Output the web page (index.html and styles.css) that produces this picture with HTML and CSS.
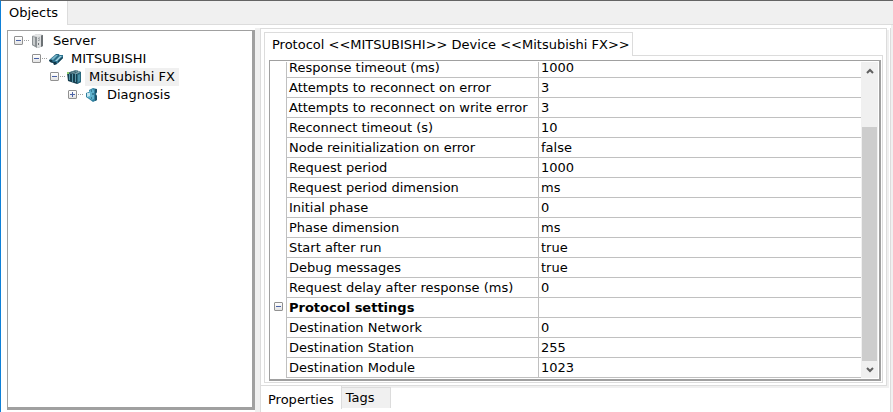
FILE: index.html
```html
<!DOCTYPE html>
<html lang="en">
<head>
    <meta charset="UTF-8">
    <meta name="viewport" content="width=device-width, initial-scale=1.0">
    <title>Objects</title>
    <link rel="stylesheet" href="styles.css">
</head>
<body>
    <div class="window">
        <div class="tabs">
            <button class="tab active">Objects</button>
            <div class="tabs-rest"></div>
        </div>

        <div class="main">
            <div class="tree-panel">
                <ul class="tree">
                    <li>
                        <div class="node">
                            <button class="toggle" aria-label="Collapse Server"></button>
                            <span class="dots"></span>
                            <svg class="icon" viewBox="0 0 16 16">
                                <path d="M2 3l5-2 6 1v11l-5 2-6-3z" fill="#a9adaf"/>
                                <path d="M2 3l5 1v11l-5-3z" fill="#8b9093"/>
                                <path d="M3 4l2 .5v8l-2-1z" fill="#c9cccd"/>
                                <path d="M2 3l5-2 6 1-5 2z" fill="#e6e7e8"/>
                                <path d="M7 4l4-1.5v11l-4 1.5z" fill="#dcdedf"/>
                                <path d="M11 2.500l2-.5v11l-2 1z" fill="#6c7174"/>
                                <path d="M8 5.500l2-.7M8 7.500l2-.7" stroke="#8b9093"/>
                                <path d="M8 10h1v2h-1z" fill="#6c7174"/>
                            </svg>
                            <span class="label">Server</span>
                        </div>
                        <ul>
                            <li>
                                <div class="node">
                                    <button class="toggle" aria-label="Collapse MITSUBISHI"></button>
                                    <span class="dots"></span>
                                    <svg class="icon" viewBox="0 0 16 16">
                                        <path d="M1 9l7-6 3 0 1 2-7 7-3-1z" fill="#2c6c86"/>
                                        <path d="M3 8l5-4 2 0-5 5z" fill="#79b7cb"/>
                                        <path d="M1 9l3 0 1 3-3-1z" fill="#123647"/>
                                        <path d="M5 11l7-7 3 0 0 3-6 6-3 1z" fill="#2f7592"/>
                                        <path d="M7 10l5-5 2 0-5 5z" fill="#a6d4e2"/>
                                        <path d="M5 11l3 0 1 2-3 1z" fill="#123647"/>
                                        <path d="M13 7l2-1v1l-5 5v-2z" fill="#174457"/>
                                    </svg>
                                    <span class="label">MITSUBISHI</span>
                                </div>
                                <ul>
                                    <li>
                                        <div class="node">
                                            <button class="toggle" aria-label="Collapse Mitsubishi FX"></button>
                                            <span class="dots"></span>
                                            <svg class="icon" viewBox="0 0 16 16">
                                                <path d="M1 4l9-3 5 2v10l-4 2-9-3z" fill="#173f50"/>
                                                <path d="M1 4l9-3 5 2-4 2z" fill="#86a9b3"/>
                                                <path d="M3 4l7-2M6 5l6-2.500" stroke="#3c6573"/>
                                                <path d="M3.500 5v6M6.500 5v8M9.500 5v8" stroke="#5796a9"/>
                                                <path d="M11 5l4-2v10l-4 2z" fill="#28687e"/>
                                                <path d="M12 6l2-1v7l-2 1z" fill="#4b91a8"/>
                                                <path d="M1 3h2v2h-2z" fill="#8ed06d"/>
                                            </svg>
                                            <span class="label selected">Mitsubishi FX</span>
                                        </div>
                                        <ul>
                                            <li>
                                                <div class="node">
                                                    <button class="toggle closed" aria-label="Expand Diagnosis"></button>
                                                    <span class="dots"></span>
                                                    <svg class="icon" viewBox="0 0 16 16">
                                                        <path d="M5 3l4-2 4 1v3l-1 2 1 2v4l-4 2-4-3-3-2V6l3-1z" fill="#2f7f9e"/>
                                                        <path d="M5 4l4-2 1 2v8l-2 1-3-2-2-1V6l2 0z" fill="#5fb2cd"/>
                                                        <path d="M3 6l3 0 0 3-3 1z" fill="#c4e6f0"/>
                                                        <path d="M7 4h1M7 11h1M8 7h2" stroke="#174c62"/>
                                                        <path d="M11 2l2 0v3l-2 2 2 2v4l-2 1z" fill="#1b526a"/>
                                                    </svg>
                                                    <span class="label">Diagnosis</span>
                                                </div>
                                            </li>
                                        </ul>
                                    </li>
                                </ul>
                            </li>
                        </ul>
                    </li>
                </ul>
            </div>

            <div class="splitter"></div>

            <div class="details">
                <div class="details-page">
                    <div class="page-tabs">
                        <button class="page-tab">Protocol &lt;&lt;MITSUBISHI&gt;&gt; Device &lt;&lt;Mitsubishi FX&gt;&gt;</button>
                        <div class="page-tabs-rest"></div>
                    </div>
                    <div class="page-body">
                        <div class="grid-box">
                            <div class="grid-view">
                                <table class="props">
                                    <tbody>
                                        <tr><td class="gutter"></td><th scope="row">Response timeout (ms)</th><td>1000</td></tr>
                                        <tr><td class="gutter"></td><th scope="row">Attempts to reconnect on error</th><td>3</td></tr>
                                        <tr><td class="gutter"></td><th scope="row">Attempts to reconnect on write error</th><td>3</td></tr>
                                        <tr><td class="gutter"></td><th scope="row">Reconnect timeout (s)</th><td>10</td></tr>
                                        <tr><td class="gutter"></td><th scope="row">Node reinitialization on error</th><td>false</td></tr>
                                        <tr><td class="gutter"></td><th scope="row">Request period</th><td>1000</td></tr>
                                        <tr><td class="gutter"></td><th scope="row">Request period dimension</th><td>ms</td></tr>
                                        <tr><td class="gutter"></td><th scope="row">Initial phase</th><td>0</td></tr>
                                        <tr><td class="gutter"></td><th scope="row">Phase dimension</th><td>ms</td></tr>
                                        <tr><td class="gutter"></td><th scope="row">Start after run</th><td>true</td></tr>
                                        <tr><td class="gutter"></td><th scope="row">Debug messages</th><td>true</td></tr>
                                        <tr><td class="gutter"></td><th scope="row">Request delay after response (ms)</th><td>0</td></tr>
                                        <tr class="group"><td class="gutter"><button class="toggle" aria-label="Collapse Protocol settings"></button></td><th scope="row">Protocol settings</th><td></td></tr>
                                        <tr><td class="gutter"></td><th scope="row">Destination Network</th><td>0</td></tr>
                                        <tr><td class="gutter"></td><th scope="row">Destination Station</th><td>255</td></tr>
                                        <tr><td class="gutter"></td><th scope="row">Destination Module</th><td>1023</td></tr>
                                    </tbody>
                                </table>
                            </div>
                            <div class="scrollbar">
                                <button class="arrow" aria-label="Scroll up">
                                    <svg viewBox="0 0 8 6"><path d="M1 5l3-3 3 3" /></svg>
                                </button>
                                <div class="track"><div class="thumb"></div></div>
                                <button class="arrow" aria-label="Scroll down">
                                    <svg viewBox="0 0 8 6"><path d="M1 1l3 3 3-3" /></svg>
                                </button>
                            </div>
                        </div>
                    </div>
                </div>
                <div class="bottom-tabs">
                    <button class="bottom-tab active">Properties</button>
                    <button class="bottom-tab">Tags</button>
                </div>
            </div>
        </div>
    </div>
</body>
</html>
```

FILE: styles.css
```css
* {
    box-sizing: border-box;
}

body {
    margin: 0;
    font-family: Verdana, "DejaVu Sans", sans-serif;
    font-size: 13px;
    line-height: 18px;
    color: #000;
    background: #fff;
}

button {
    font: inherit;
    color: inherit;
    border: none;
    padding: 0;
    background: none;
}

.window {
    display: flex;
    flex-direction: column;
    height: 100vh;
    border-top: 1px solid #646464;
    border-left: 1px solid #0f80d7;
}

/* top tabs */
.tabs {
    display: flex;
    height: 24px;
}

.tab {
    padding: 0 9px 0 8px;
    border-right: 1px solid #dcdcdc;
}

.tabs-rest {
    flex: 1;
    background: #f0f0f0;
    border-bottom: 1px solid #dcdcdc;
}

.main {
    display: flex;
    flex: 1;
    min-height: 0;
    padding-top: 3px;
    border-right: 2px solid #f0f0f0;
}

/* object tree */
.tree-panel {
    width: 248px;
    margin: 2px 0 2px 6px;
    border: 1px solid #a0a0a0;
    border-width: 1px 3px 3px 1px;
}

.tree,
.tree ul {
    list-style: none;
    margin: 0;
    padding: 0;
}

.tree {
    padding: 1px 0 0 6px;
}

.tree ul {
    padding-left: 18px;
}

.node {
    display: flex;
    align-items: center;
    height: 18px;
}

.toggle {
    display: block;
    width: 9px;
    height: 9px;
    margin-bottom: 2px;
    border: 1px solid #919191;
    border-radius: 1px;
    background: linear-gradient(#4b63a7, #4b63a7) center / 5px 1px no-repeat, linear-gradient(#fff, #e4e4e4);
}

.toggle.closed {
    background: linear-gradient(#4b63a7, #4b63a7) center / 5px 1px no-repeat, linear-gradient(#4b63a7, #4b63a7) center / 1px 5px no-repeat, linear-gradient(#fff, #e4e4e4);
}

.dots {
    width: 5px;
    margin: 0 1px 2px;
    border-top: 1px dotted #a0a0a0;
}

.icon {
    width: 16px;
    height: 16px;
}

.label {
    margin-left: 3px;
    padding: 0 4px;
}

.label.selected {
    background: #f0f0f0;
}

.splitter {
    width: 5px;
    background: #f0f0f0;
}

/* right side */
.details {
    display: flex;
    flex: 1;
    flex-direction: column;
    min-width: 0;
    border-left: 1px solid #dcdcdc;
    border-right: 1px solid #dcdcdc;
}

.details-page {
    display: flex;
    flex: 1;
    flex-direction: column;
    min-height: 0;
    margin-right: 3px;
    padding: 3px 3px 2px;
    border: 1px solid #dcdcdc;
    border-left: none;
    box-shadow: 2px 2px 0 #f0f0f0;
}

.page-tabs {
    display: flex;
    height: 24px;
}

.page-tab {
    padding: 0 2px 0 7px;
    border: 1px solid #dcdcdc;
    border-bottom: none;
}

.page-tabs-rest {
    flex: 1;
    border-bottom: 1px solid #dcdcdc;
}

.page-body {
    display: flex;
    flex: 1;
    min-height: 0;
    padding: 4px 1px 1px 4px;
    border: 1px solid #dcdcdc;
    border-top: none;
}

.grid-box {
    display: flex;
    flex: 1;
    min-width: 0;
    padding: 1px;
    border: 1px solid #a0a0a0;
    border-width: 1px 2px 2px 1px;
}

.grid-view {
    display: flex;
    flex: 1;
    flex-direction: column;
    justify-content: flex-end;
    overflow: hidden;
}

.props {
    width: 100%;
    table-layout: fixed;
    border-collapse: separate;
    border-spacing: 0;
}

.props td,
.props th {
    height: 20px;
    padding: 0 2px;
    border-right: 1px solid #c0c0c0;
    border-bottom: 1px solid #c0c0c0;
    font-weight: normal;
    text-align: left;
    white-space: nowrap;
}

.props th {
    width: 252px;
}

.props .gutter {
    width: 16px;
    padding-left: 3px;
    border-bottom: none;
}

.props td:last-child {
    border-right: none;
}

.props .group th {
    font-weight: bold;
}

.props .toggle {
    margin-bottom: 4px;
}

.scrollbar {
    display: flex;
    flex-direction: column;
    width: 17px;
    padding: 0 1px;
    background: #f0f0f0;
}

.arrow {
    height: 17px;
    line-height: 0;
}

.arrow svg {
    width: 8px;
    height: 6px;
    fill: none;
    stroke: #606060;
    stroke-width: 2;
}

.track {
    display: flex;
    flex: 1;
    flex-direction: column;
    justify-content: flex-end;
}

.thumb {
    height: 83%;
    background: #cdcdcd;
}

/* bottom tabs */
.bottom-tabs {
    display: flex;
    align-items: flex-start;
    height: 26px;
}

.bottom-tab {
    height: 21px;
    margin-top: 1px;
    padding: 0 16px 0 4px;
    border: 1px solid #dcdcdc;
    border-width: 1px 1px 0 0;
    background: #f0f0f0;
}

.bottom-tab.active {
    height: 23px;
    margin-top: 0;
    padding: 4px 7px 0;
    border-top: none;
    background: #fff;
}
```
